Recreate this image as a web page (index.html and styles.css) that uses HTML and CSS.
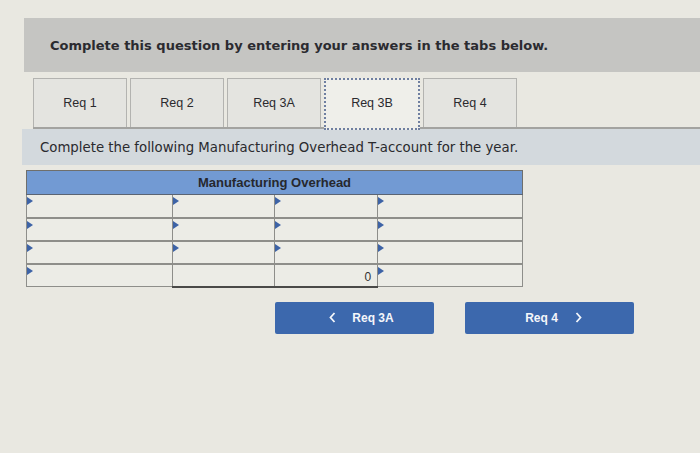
FILE: index.html
```html
<!DOCTYPE html>
<html>
<head>
<meta charset="utf-8">
<link rel="stylesheet" href="styles.css">
</head>
<body>
<div class="page">
  <div class="question">Complete this question by entering your answers in the tabs below.</div>
  <div class="tabs">
    <div class="tab">Req 1</div>
    <div class="tab">Req 2</div>
    <div class="tab">Req 3A</div>
    <div class="tab active">Req 3B</div>
    <div class="tab">Req 4</div>
  </div>
  <div class="instr">Complete the following Manufacturing Overhead T-account for the year.</div>
  <table class="taccount">
    <tr><th colspan="4">Manufacturing Overhead</th></tr>
    <tr><td class="c1 mk"></td><td class="c2 mk"></td><td class="c3 mk"></td><td class="c4 mk"></td></tr>
    <tr><td class="c1 mk"></td><td class="c2 mk"></td><td class="c3 mk"></td><td class="c4 mk"></td></tr>
    <tr><td class="c1 mk"></td><td class="c2 mk"></td><td class="c3 mk"></td><td class="c4 mk"></td></tr>
    <tr class="total"><td class="c1 mk"></td><td class="c2"></td><td class="c3 num">0</td><td class="c4 mk"></td></tr>
  </table>
  <div class="nav">
    <div class="btn prev"><svg class="chev" width="7" height="11" viewBox="0 0 7 11"><polyline points="5.5,1 1.5,5.5 5.5,10" fill="none" stroke="#f4f6fa" stroke-width="1.8"/></svg><span>Req 3A</span></div>
    <div class="btn next"><span>Req 4</span><svg class="chev" width="7" height="11" viewBox="0 0 7 11"><polyline points="1.5,1 5.5,5.5 1.5,10" fill="none" stroke="#f4f6fa" stroke-width="1.8"/></svg></div>
  </div>
</div>
</body>
</html>
```

FILE: styles.css
```css
html, body {
  margin: 0;
  padding: 0;
  background: #e9e8e1;
  font-family: "DejaVu Sans", Verdana, sans-serif;
  color: #2a2a2e;
}
.page {
  padding-top: 18px;
  height: 435px;
  overflow: hidden;
}
.question {
  margin-left: 24px;
  height: 54px;
  background: #c5c5c2;
  padding-left: 26px;
  display: flex;
  align-items: center;
  font-weight: bold;
  font-size: 13px;
  color: #2b2b30;
}
.tabs {
  margin-top: 6px;
  margin-left: 33px;
  display: flex;
  gap: 3px;
  border-bottom: 2px solid #a3a3a0;
  height: 49px;
}
.tab {
  width: 92px;
  height: 48px;
  border: 1px solid #b3b3b0;
  border-bottom: none;
  background: #e4e4e0;
  display: flex;
  align-items: center;
  justify-content: center;
  font-family: "Liberation Sans", Arial, sans-serif;
  font-size: 12.5px;
  color: #2a2a2e;
}
.tab.active {
  background: #efefea;
  border: 2px dotted #6f7fa0;
  height: 50px;
  width: 92px;
  padding-bottom: 3px;
  box-sizing: border-box;
  height: 52px;
  width: 96px;
  position: relative;
  z-index: 1;
}
.instr {
  margin-left: 22px;
  height: 36px;
  background: #d3d9dd;
  padding-left: 18px;
  display: flex;
  align-items: center;
  font-size: 13.3px;
  color: #2a2a2e;
}
.taccount {
  margin-top: 5px;
  margin-left: 26px;
  border-collapse: collapse;
  width: 497px;
  border: 1px solid #6f6f6c;
}
.taccount th {
  height: 24px;
  padding: 0;
  background: #729ad3;
  font-family: "Liberation Sans", Arial, sans-serif;
  font-size: 13px;
  font-weight: bold;
  color: #26282e;
  border-bottom: 1px solid #5b6473;
  vertical-align: top;
  padding-top: 4px;
  box-sizing: border-box;
}
.taccount td {
  height: 23px;
  padding: 0;
  border: 1px solid #8e8e8a;
  border-top: 2px solid #8e8e8a;
  background: #ecece6;
  position: relative;
  box-sizing: border-box;
}
.taccount tr:nth-child(2) td { border-top: 1px solid #5b6473; }
.c1 { width: 146px; }
.c2 { width: 103px; }
.c3 { width: 103px; border-left: 1px solid #4a4a48 !important; }
.c4 { width: 145px; }
.c2 { border-left: 1px solid #6a6a68 !important; }
.total .c2, .total .c3 { border-bottom: 2px solid #4a4a48; }
.mk::before {
  content: "";
  position: absolute;
  left: 0;
  top: 2px;
  border-left: 6px solid #3d63a6;
  border-top: 4px solid transparent;
  border-bottom: 4px solid transparent;
}
.num {
  text-align: right;
  padding-right: 6px !important;
  font-family: "Liberation Sans", Arial, sans-serif;
  font-size: 12px;
  color: #333;
  vertical-align: bottom;
  padding-bottom: 2px !important;
}
.nav {
  margin-top: 14px;
  margin-left: 275px;
  display: flex;
  gap: 31px;
}
.btn {
  height: 32px;
  background: #3c68ad;
  border-radius: 2px;
  color: #f4f6fa;
  font-family: "Liberation Sans", Arial, sans-serif;
  font-weight: bold;
  font-size: 12px;
  display: flex;
  align-items: center;
  justify-content: center;
}
.prev { width: 159px; gap: 16px; padding-left: 14px; box-sizing: border-box; }
.next { width: 169px; gap: 17px; padding-left: 8px; box-sizing: border-box; }
.chev {
  display: block;
}
```
